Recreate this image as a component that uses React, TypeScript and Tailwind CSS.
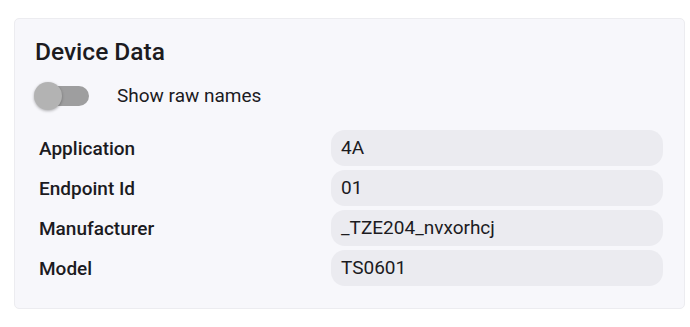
import React from "react";

const rows = [
  { label: "Application", value: "4A" },
  { label: "Endpoint Id", value: "01" },
  { label: "Manufacturer", value: "_TZE204_nvxorhcj" },
  { label: "Model", value: "TS0601" },
];

export default function App() {
  return (
    <div className="min-h-[327px] bg-white pt-[18px] pl-[14px] font-['Roboto',sans-serif] text-[#1c1b1f]">
      <div className="w-[671px] h-[291px] rounded-[5px] border border-[#ececf0] bg-[#f7f7fb] pl-[20px] pr-[21px] pt-[17px]">
        <h2 className="text-[24.5px] leading-[32px] font-medium">Device Data</h2>

        {/* toggle */}
        <div className="mt-[9px] flex items-center h-[38px]">
          <div className="relative w-[54px] h-[20px] rounded-full bg-[#9e9e9f]">
            <div className="absolute -left-[1px] -top-[4px] w-[28px] h-[28px] rounded-full bg-[#b3b3b3] shadow-[0_1px_3px_rgba(0,0,0,0.3)]" />
          </div>
          <span className="ml-[28px] text-[19px] leading-[24px]">Show raw names</span>
        </div>

        <div className="mt-[15px] flex flex-col gap-[4px]">
          {rows.map((r) => (
            <div key={r.label} className="flex items-center h-[36px]">
              <div className="w-[296px] pl-[4px] pt-[2px] text-[19px] font-medium">{r.label}</div>
              <div className="flex-1 h-[36px] flex items-center rounded-[14px] bg-[#ebebf0] pl-[10px] pt-[1px] text-[19px]">
                {r.value}
              </div>
            </div>
          ))}
        </div>
      </div>
    </div>
  );
}
